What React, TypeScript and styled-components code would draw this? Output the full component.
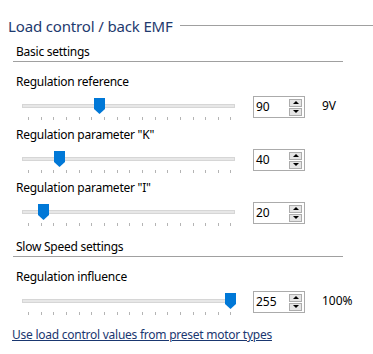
import styled, { createGlobalStyle } from 'styled-components';

const MAX = 255;
const TICKS = [0, 16, 32, 48, 64, 80, 96, 112, 128, 144, 160, 176, 192, 208, 224, 240, 255];

const settings = {
  basic: [
    { label: 'Regulation reference', value: 90, unit: '9V' },
    { label: 'Regulation parameter "K"', value: 40, unit: '' },
    { label: 'Regulation parameter "I"', value: 20, unit: '' },
  ],
  slow: [{ label: 'Regulation influence', value: 255, unit: '100%' }],
};

export default function App() {
  return (
    <>
      <GlobalStyle />
      <Page>
        <TitleRow>
          <Title>Load control / back EMF</Title>
          <TitleLine />
        </TitleRow>

        <SectionHeader>Basic settings</SectionHeader>
        {settings.basic.map((s) => (
          <Setting key={s.label} {...s} />
        ))}

        <SectionHeader $top={6}>Slow Speed settings</SectionHeader>
        {settings.slow.map((s) => (
          <Setting key={s.label} {...s} />
        ))}

        <Link href="#">Use load control values from preset motor types</Link>
      </Page>
    </>
  );
}

function Setting({ label, value, unit }: { label: string; value: number; unit: string }) {
  return (
    <>
      <Label>{label}</Label>
      <ControlRow>
        <Slider value={value} />
        <SpinBox>
          <SpinText>{value}</SpinText>
          <SpinButtons>
            <SpinButton>
              <Arrow $up />
            </SpinButton>
            <SpinButton>
              <Arrow />
            </SpinButton>
          </SpinButtons>
        </SpinBox>
        <Unit>{unit}</Unit>
      </ControlRow>
    </>
  );
}

function Slider({ value }: { value: number }) {
  const pos = (v: number) => 12 + (v / MAX) * 202;
  return (
    <SliderBox>
      <Track />
      <Thumb style={{ left: pos(value) - 5.5 }} width="11" height="16" viewBox="0 0 11 16">
        <path d="M0 0 H11 V11 L5.5 16 L0 11 Z" fill="#0078d7" />
      </Thumb>
      {TICKS.map((t) => (
        <Tick key={t} style={{ left: Math.round(pos(t)) }} />
      ))}
    </SliderBox>
  );
}

const GlobalStyle = createGlobalStyle`
  body {
    margin: 0;
    background: #ffffff;
    font-family: "Noto Sans", "Open Sans", sans-serif;
    font-size: 12px;
    letter-spacing: -0.25px;
    color: #000000;
  }
`;

const Page = styled.div`
  width: 373px;
  height: 354px;
  display: flex;
  flex-direction: column;
  overflow: hidden;
`;

const TitleRow = styled.div`
  display: flex;
  align-items: center;
  height: 20px;
  margin-top: 16px;
  padding-left: 8px;
`;

const Title = styled.div`
  font-size: 15px;
  letter-spacing: -0.15px;
  line-height: 20px;
  color: #1e3a6e;
  white-space: nowrap;
`;

const TitleLine = styled.div`
  flex: 1;
  height: 1px;
  margin-left: 7px;
  margin-top: -1px;
  background: #a0a0a0;
`;

const SectionHeader = styled.div<{ $top?: number }>`
  margin: ${(p) => p.$top ?? 8}px 0 12px 13px;
  width: 327px;
  height: 17px;
  padding-left: 3px;
  line-height: 16px;
  border-bottom: 1px solid #a0a0a0;
`;

const Label = styled.div`
  margin-left: 16px;
  line-height: 16px;
  height: 16px;
  white-space: nowrap;
`;

const ControlRow = styled.div`
  display: flex;
  align-items: flex-start;
  height: 37px;
  padding-left: 16px;
`;

const SliderBox = styled.div`
  position: relative;
  width: 224px;
  height: 37px;
`;

const Track = styled.div`
  position: absolute;
  left: 6px;
  right: 5px;
  top: 14px;
  height: 2px;
  background: #e7e7e7;
  border: 1px solid #d6d6d6;
`;

const Thumb = styled.svg`
  position: absolute;
  top: 8px;
`;

const Tick = styled.div`
  position: absolute;
  top: 27px;
  width: 1px;
  height: 3px;
  background: #b4b4b4;
`;

const SpinBox = styled.div`
  margin: 6px 0 0 13px;
  width: 52px;
  height: 22px;
  box-sizing: border-box;
  border: 1px solid #ababab;
  display: flex;
  align-items: center;
  justify-content: space-between;
  padding: 0 2px 0 2px;
`;

const SpinText = styled.span`
  line-height: 16px;
  letter-spacing: 0;
`;

const SpinButtons = styled.div`
  display: flex;
  flex-direction: column;
  gap: 1px;
`;

const SpinButton = styled.div`
  width: 13px;
  height: 8px;
  box-sizing: border-box;
  border: 1px solid #acacac;
  background: #e5e5e5;
  display: flex;
  align-items: center;
  justify-content: center;
`;

const Arrow = styled.span<{ $up?: boolean }>`
  width: 0;
  height: 0;
  border-left: 3px solid transparent;
  border-right: 3px solid transparent;
  ${(p) => (p.$up ? 'border-bottom: 3px solid #000;' : 'border-top: 3px solid #000;')}
`;

const Unit = styled.span`
  margin: 8px 0 0 17px;
  line-height: 16px;
  letter-spacing: 0;
`;

const Link = styled.a`
  margin: 5px 0 0 12px;
  line-height: 16px;
  color: #1a3770;
  text-decoration: underline;
  white-space: nowrap;
`;
